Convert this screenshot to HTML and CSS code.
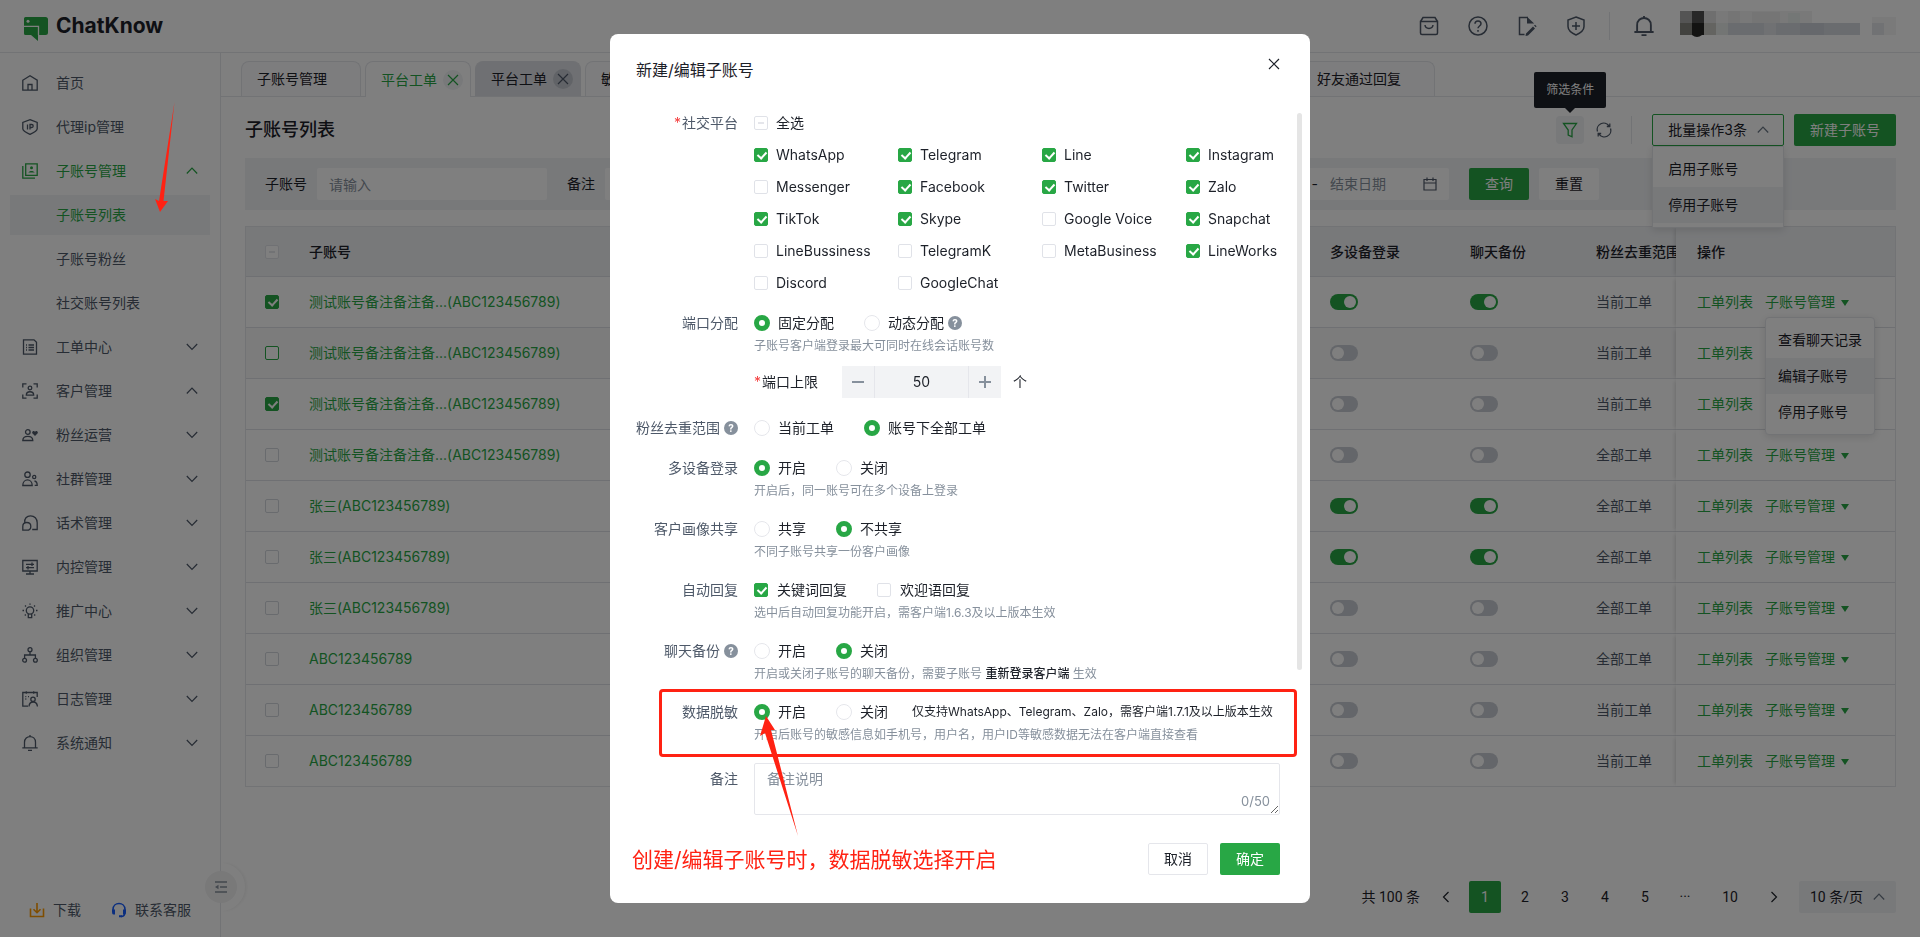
FILE: index.html
```html
<!DOCTYPE html>
<html lang="zh-CN">
<head>
  <meta charset="UTF-8">
  <meta name="viewport" content="width=device-width, initial-scale=1.0">
  <title>ChatKnow - 子账号列表</title>
  <link rel="stylesheet" href="styles.css">
</head>
<body>

<!-- Icon sprite -->
<svg class="sprite" aria-hidden="true">
  <symbol id="i-home" viewBox="0 0 16 16"><path d="M.8 5.2 8 .8l7.200 4.400v10H.8zM6 15V9.500h4V15"/></symbol>
  <symbol id="i-ip" viewBox="0 0 16 16"><path d="M8 .7 15.200 3.500v6.200c0 2.400-3.500 4-7.200 5.600C4.300 13.700.8 12.100.8 9.700V3.500zM5.500 5.500v5M8 10.500v-5h1.700a1.400 1.400 0 0 1 0 3H8"/></symbol>
  <symbol id="i-account" viewBox="0 0 16 16"><path d="M3.700.8h11.500v11.500H3.700zM.8 3v12.200H13"/><circle cx="9.500" cy="4.800" r="1.500" fill="currentColor" stroke="none"/><path d="M6.300 9.600c1-2.200 5.400-2.200 6.400 0z" fill="currentColor" stroke="none"/></symbol>
  <symbol id="i-order" viewBox="0 0 16 16"><path d="M1.500.8h10.500l2.500 2.500v11.900h-13zM4 6h1M6.500 6H12M4 8.500h1M6.500 8.500H12M4 11h1M6.500 11H12"/></symbol>
  <symbol id="i-customer" viewBox="0 0 16 16"><path d="M.8 4.500V.8h3.700M11.500.8h3.700v3.700M15.200 11.500v3.700h-3.700M4.500 15.200H.8v-3.700"/><circle cx="8" cy="5" r="1.800"/><path d="M4.300 12.200c0-4.600 7.400-4.600 7.400 0z"/></symbol>
  <symbol id="i-fans" viewBox="0 0 16 16"><circle cx="5.800" cy="5" r="2.300"/><path d="M.8 13.500c0-5.400 10-5.400 10 0z"/><path d="M13 9 10.300 6.300c-.8-2 1.700-3.200 2.700-1.600 1-1.600 3.500-.4 2.700 1.600z" fill="currentColor" stroke="none"/></symbol>
  <symbol id="i-group" viewBox="0 0 16 16"><circle cx="5.500" cy="3.700" r="2.700"/><path d="M.8 14.500c0-7.400 9.400-7.400 9.400 0z"/><circle cx="12.200" cy="6" r="1.600"/><path d="M12.500 10c1.600.3 2.700 1.800 2.700 4.300h-2.500"/></symbol>
  <symbol id="i-speech" viewBox="0 0 16 16"><path d="M2.800 8C1.800 3.500 5 .8 8.500.8c4 0 6.700 3 6.700 7v6.700h-5"/><path d="M.8 15.200v-3.800c0-5.200 8-5.200 8 0 0 2.300-1.800 3.800-4 3.800z"/></symbol>
  <symbol id="i-control" viewBox="0 0 16 16"><path d="M.8 1.500h14.400v10.500H.8zM8 12v3M4 15h8M4 5.300h8M10 3.500v3.600M4 8.700h8M6 7v3.400"/></symbol>
  <symbol id="i-bulb" viewBox="0 0 16 16"><circle cx="8" cy="7.500" r="3.700"/><path d="M6.300 11v3.700h3.400V11M8 .5v1.300M3 2.500l1 1M13 2.500l-1 1M.5 7.500H2M14 7.500h1.500M2.800 12.500l1-1M13.200 12.500l-1-1"/></symbol>
  <symbol id="i-org" viewBox="0 0 16 16"><circle cx="8" cy="2.700" r="2"/><circle cx="2.600" cy="13.300" r="1.900"/><circle cx="13.400" cy="13.300" r="1.900"/><path d="M8 4.700V8M2.600 11.400V8h10.800v3.400"/></symbol>
  <symbol id="i-log" viewBox="0 0 16 16"><path d="M6 15.200H.8V1.500h14.400V6M4.300.3v2.400M11.700.3v2.400M3.300 5.700h1M3.300 8h1M6 5.700h1"/><circle cx="11" cy="8.300" r="2.200"/><path d="M7 15.500c.4-6 8-6 8.400 0"/></symbol>
  <symbol id="i-bell" viewBox="0 0 16 16"><path d="M2.500 12.800V7.300c0-7.600 11-7.600 11 0v5.500M.3 12.800h15.400M6 15.300h4M8 0v1.500"/></symbol>
  <symbol id="i-down" viewBox="0 0 12 12"><path d="m.8 3 5.200 5.500L11.200 3"/></symbol>
  <symbol id="i-up" viewBox="0 0 12 12"><path d="m.8 8.500L6 3l5.200 5.500"/></symbol>
  <symbol id="i-left" viewBox="0 0 12 12"><path d="M8.500 1 3.500 6l5 5"/></symbol>
  <symbol id="i-right" viewBox="0 0 12 12"><path d="m3.500 1 5 5-5 5"/></symbol>
  <symbol id="i-close" viewBox="0 0 12 12"><path d="m1 1 10 10M11 1 1 11"/></symbol>
  <symbol id="i-minus" viewBox="0 0 12 12"><path d="M0 6h12"/></symbol>
  <symbol id="i-plus" viewBox="0 0 12 12"><path d="M0 6h12M6 0v12"/></symbol>
  <symbol id="i-download" viewBox="0 0 16 16"><path d="M1.500 6.500v8h13v-8M8 1v9.500M4.500 7.200 8 10.700l3.500-3.500"/></symbol>
  <symbol id="i-headset" viewBox="0 0 16 16"><path d="M2 10V7.500C2-.5 14-.5 14 7.500V10c0 3-1.500 4.500-4 4.500"/><path d="M1 7.500h3v5H2.500C1 12.500 1 11 1 7.500zM12 7.500h3c0 3.500 0 5-1.500 5H12zM8 13.300h3v2H8z" fill="currentColor" stroke="none"/></symbol>
  <symbol id="i-fold" viewBox="0 0 14 14"><path d="M1 2h12M6 7h7M1 12h12"/><path d="M1 7l3.500-2.300v4.600z" fill="currentColor" stroke="none"/></symbol>
  <symbol id="i-bag" viewBox="0 0 20 20"><path d="M1.500 5.500h17v11.500a1.500 1.500 0 0 1-1.500 1.500H3A1.500 1.500 0 0 1 1.500 17zL4 1.500h12l2.500 4M6 9c.5 4.500 7.500 4.500 8 0"/></symbol>
  <symbol id="i-help" viewBox="0 0 20 20"><circle cx="10" cy="10" r="9"/><path d="M7 7.800c0-3.800 6-3.800 6 0 0 2.200-3 2.200-3 4.500M10 14v1.700"/></symbol>
  <symbol id="i-doc" viewBox="0 0 20 20"><path d="M7.500 18.500h-5v-17h8.500"/><path d="M10 .7 17.200 7.500H10zM9 17.500l7-7 2 2-7 7-2.500.4zM17 9.500l1-.8 1.600 1.600-.8 1z" fill="currentColor" stroke="none"/></symbol>
  <symbol id="i-shield" viewBox="0 0 20 20"><path d="m10 1 8 3v6.500c0 4-3.500 6.500-8 8.500-4.500-2-8-4.500-8-8.500V4zM10 6v8M6 10h8"/></symbol>
  <symbol id="i-filter" viewBox="0 0 16 16"><path d="M1.500 1.500h13L10 8v6.800L6.200 13V8z"/></symbol>
  <symbol id="i-refresh" viewBox="0 0 16 16"><path d="M1.500 9.500A6.500 6.500 0 0 1 13 3.800M14.500 6.500A6.500 6.500 0 0 1 3 12.200M13.800 1.500v3h-3M2.200 14.500v-3h3"/></symbol>
  <symbol id="i-calendar" viewBox="0 0 14 14"><path d="M1 2.500h12V13H1zM1 6h12M4 .5v3.500M10 .5v3.500"/></symbol>
</svg>

<div class="app">
  <header class="topbar">
    <a class="logo" href="#">
      <svg class="logo-mark" viewBox="0 0 24 24" aria-hidden="true">
        <path fill="#28a745" d="M1.500 0h20A2.500 2.500 0 0 1 24 2.500v13a2.500 2.500 0 0 1-2.500 2.500H14v6l-7-6H1.500A1.500 1.500 0 0 1 0 16.500v-15A1.500 1.500 0 0 1 1.500 0z"/>
        <path fill="none" stroke="#fff" stroke-width="1.300" d="M0 9.300h14.500V18"/>
        <circle cx="4" cy="4.200" r="1.500" fill="#fff"/>
      </svg>
      <span>ChatKnow</span>
    </a>
    <nav class="top-actions" aria-label="快捷入口">
      <button class="icon-btn" aria-label="商城"><svg class="icon i20"><use href="#i-bag"/></svg></button>
      <button class="icon-btn" aria-label="帮助"><svg class="icon i20"><use href="#i-help"/></svg></button>
      <button class="icon-btn" aria-label="文档"><svg class="icon i20"><use href="#i-doc"/></svg></button>
      <button class="icon-btn" aria-label="安全"><svg class="icon i20"><use href="#i-shield"/></svg></button>
      <span class="divider"></span>
      <button class="icon-btn" aria-label="通知"><svg class="icon i20"><use href="#i-bell"/></svg></button>
      <svg class="user-mask" viewBox="0 0 216 26" aria-hidden="true">
        <path fill="#a8a8a8" d="M0 0h12v12H0z"/><path fill="#505050" d="M12 0h12v12H12z"/><path fill="#dedede" d="M24 0h12v12H24z"/>
        <path fill="#f3f3f3" d="M36 0h12v12H36zM60 0h72v12H60z"/><path fill="#eaeaea" d="M48 0h12v12H48zM72 1h28v11H72z"/>
        <path fill="#e9eeec" d="M108 2h12v10h-12z"/>
        <path fill="#84847f" d="M0 12h12v12H0z"/><path fill="#262624" d="M12 12h12v12H12z"/><path fill="#c9c8c3" d="M24 12h12v12H24z"/><path fill="#e6eae8" d="M36 12h12v12H36z"/>
        <path fill="#d5d8de" d="M48 12h132v12H48z"/><path fill="#e0e2e6" d="M84 12h12v12H84z"/><path fill="#ccd0d9" d="M120 12h24v12h-24z"/>
        <path fill="#262624" d="M12 24h10q-5 4-10 0z"/>
        <path fill="#f4f4f4" d="M192 6h24v6h-24zM204 12h12v12h-12z"/><path fill="#e2e4e9" d="M192 12h12v12h-12z"/>
      </svg>
    </nav>
  </header>

  <div class="layout">
    <aside class="sidebar">
      <nav class="menu" aria-label="主菜单">
        <a class="menu-item" href="#"><svg class="icon i16"><use href="#i-home"/></svg><span>首页</span></a>
        <a class="menu-item" href="#"><svg class="icon i16"><use href="#i-ip"/></svg><span>代理ip管理</span></a>
        <a class="menu-item current" href="#"><svg class="icon i16"><use href="#i-account"/></svg><span>子账号管理</span><svg class="icon i12"><use href="#i-up"/></svg></a>
        <a class="menu-item sub current selected" href="#">子账号列表</a>
        <a class="menu-item sub" href="#">子账号粉丝</a>
        <a class="menu-item sub" href="#">社交账号列表</a>
        <a class="menu-item" href="#"><svg class="icon i16"><use href="#i-order"/></svg><span>工单中心</span><svg class="icon i12"><use href="#i-down"/></svg></a>
        <a class="menu-item" href="#"><svg class="icon i16"><use href="#i-customer"/></svg><span>客户管理</span><svg class="icon i12"><use href="#i-up"/></svg></a>
        <a class="menu-item" href="#"><svg class="icon i16"><use href="#i-fans"/></svg><span>粉丝运营</span><svg class="icon i12"><use href="#i-down"/></svg></a>
        <a class="menu-item" href="#"><svg class="icon i16"><use href="#i-group"/></svg><span>社群管理</span><svg class="icon i12"><use href="#i-down"/></svg></a>
        <a class="menu-item" href="#"><svg class="icon i16"><use href="#i-speech"/></svg><span>话术管理</span><svg class="icon i12"><use href="#i-down"/></svg></a>
        <a class="menu-item" href="#"><svg class="icon i16"><use href="#i-control"/></svg><span>内控管理</span><svg class="icon i12"><use href="#i-down"/></svg></a>
        <a class="menu-item" href="#"><svg class="icon i16"><use href="#i-bulb"/></svg><span>推广中心</span><svg class="icon i12"><use href="#i-down"/></svg></a>
        <a class="menu-item" href="#"><svg class="icon i16"><use href="#i-org"/></svg><span>组织管理</span><svg class="icon i12"><use href="#i-down"/></svg></a>
        <a class="menu-item" href="#"><svg class="icon i16"><use href="#i-log"/></svg><span>日志管理</span><svg class="icon i12"><use href="#i-down"/></svg></a>
        <a class="menu-item" href="#"><svg class="icon i16"><use href="#i-bell"/></svg><span>系统通知</span><svg class="icon i12"><use href="#i-down"/></svg></a>
      </nav>
      <div class="side-footer">
        <a href="#"><svg class="icon i16 orange"><use href="#i-download"/></svg>下载</a>
        <a href="#"><svg class="icon i16 blue"><use href="#i-headset"/></svg>联系客服</a>
      </div>
      <div class="fold">
        <button class="fold-btn" aria-label="收起菜单"><svg class="icon i14"><use href="#i-fold"/></svg></button>
      </div>
    </aside>

    <main class="main">
      <div class="tabs">
        <a class="tab" href="#">子账号管理</a>
        <a class="tab closable active" href="#">平台工单<span class="tab-close"><svg class="icon i12"><use href="#i-close"/></svg></span></a>
        <a class="tab closable hover" href="#">平台工单<span class="tab-close"><svg class="icon i12"><use href="#i-close"/></svg></span></a>
        <a class="tab" href="#">敏感词管理</a>
        <a class="tab" href="#">子账号粉丝</a>
        <a class="tab" href="#">子账号列表</a>
        <a class="tab" href="#">关键词回复</a>
        <a class="tab closable" href="#">社群管理<span class="tab-close"><svg class="icon i12"><use href="#i-close"/></svg></span></a>
        <a class="tab closable" href="#">话术管理<span class="tab-close"><svg class="icon i12"><use href="#i-close"/></svg></span></a>
        <a class="tab" href="#">好友通过回复</a>
      </div>

      <div class="content">
        <div class="title-row">
          <h1>子账号列表</h1>
          <div class="tool filter-tool">
            <button class="tool-btn on" aria-label="筛选条件"><svg class="icon i16"><use href="#i-filter"/></svg></button>
            <span class="tooltip">筛选条件</span>
          </div>
          <button class="tool-btn" aria-label="刷新"><svg class="icon i16"><use href="#i-refresh"/></svg></button>
          <span class="divider"></span>
          <div class="batch">
            <button class="btn batch-btn">批量操作3条<svg class="icon i12"><use href="#i-up"/></svg></button>
            <ul class="dropdown batch-menu">
              <li>启用子账号</li>
              <li class="hover">停用子账号</li>
            </ul>
          </div>
          <button class="btn primary new-btn">新建子账号</button>
        </div>

        <form class="filter-bar">
          <label for="f-account">子账号</label>
          <input id="f-account" type="text" placeholder="请输入">
          <label for="f-remark">备注</label>
          <input id="f-remark" type="text" placeholder="请输入">
          <label for="f-start">创建时间</label>
          <div class="range">
            <input id="f-start" type="text" placeholder="开始日期">
            <span>-</span>
            <input class="range-end" type="text" placeholder="结束日期" aria-label="结束日期">
            <svg class="icon i14"><use href="#i-calendar"/></svg>
          </div>
          <button type="button" class="btn primary">查询</button>
          <button type="button" class="btn plain">重置</button>
        </form>

        <div class="table-wrap">
          <table>
            <thead>
              <tr>
                <th class="c-check"><input type="checkbox" class="check half" aria-label="全选"></th>
                <th>子账号</th>
                <th class="c-device">多设备登录</th>
                <th class="c-backup">聊天备份</th>
                <th class="c-scope">粉丝去重范围</th>
                <th class="c-action">操作</th>
              </tr>
            </thead>
            <tbody id="rows"></tbody>
          </table>
        </div>

        <div class="pagination">
          <span class="total">共 100 条</span>
          <button class="arrow" aria-label="上一页"><svg class="icon i12"><use href="#i-left"/></svg></button>
          <button class="on">1</button>
          <button>2</button>
          <button>3</button>
          <button>4</button>
          <button>5</button>
          <button>···</button>
          <button class="wide">10</button>
          <button class="arrow" aria-label="下一页"><svg class="icon i12"><use href="#i-right"/></svg></button>
          <button class="page-size">10 条/页<svg class="icon i12"><use href="#i-up"/></svg></button>
        </div>
      </div>
    </main>
  </div>
</div>

<!-- Create / edit dialog -->
<div class="mask">
  <div class="modal" role="dialog" aria-labelledby="dialog-title">
    <div class="modal-head">
      <h2 id="dialog-title">新建/编辑子账号</h2>
      <button class="modal-close" aria-label="关闭"><svg class="icon i12"><use href="#i-close"/></svg></button>
    </div>
    <form class="modal-body">
      <div class="item">
        <div class="label"><i>*</i>社交平台</div>
        <div class="field">
          <label class="opt"><input type="checkbox" class="check half">全选</label>
          <div class="platforms">
            <label class="opt"><input type="checkbox" class="check" checked>WhatsApp</label>
            <label class="opt"><input type="checkbox" class="check" checked>Telegram</label>
            <label class="opt"><input type="checkbox" class="check" checked>Line</label>
            <label class="opt"><input type="checkbox" class="check" checked>Instagram</label>
            <label class="opt"><input type="checkbox" class="check">Messenger</label>
            <label class="opt"><input type="checkbox" class="check" checked>Facebook</label>
            <label class="opt"><input type="checkbox" class="check" checked>Twitter</label>
            <label class="opt"><input type="checkbox" class="check" checked>Zalo</label>
            <label class="opt"><input type="checkbox" class="check" checked>TikTok</label>
            <label class="opt"><input type="checkbox" class="check" checked>Skype</label>
            <label class="opt"><input type="checkbox" class="check">Google Voice</label>
            <label class="opt"><input type="checkbox" class="check" checked>Snapchat</label>
            <label class="opt"><input type="checkbox" class="check">LineBussiness</label>
            <label class="opt"><input type="checkbox" class="check">TelegramK</label>
            <label class="opt"><input type="checkbox" class="check">MetaBusiness</label>
            <label class="opt"><input type="checkbox" class="check" checked>LineWorks</label>
            <label class="opt"><input type="checkbox" class="check">Discord</label>
            <label class="opt"><input type="checkbox" class="check">GoogleChat</label>
          </div>
        </div>
      </div>

      <div class="item">
        <div class="label">端口分配</div>
        <div class="field">
          <div class="opts">
            <label class="opt"><input type="radio" class="radio" name="port" checked>固定分配</label>
            <label class="opt"><input type="radio" class="radio" name="port">动态分配<span class="tip">?</span></label>
          </div>
          <p class="hint">子账号客户端登录最大可同时在线会话账号数</p>
          <div class="port-row">
            <label for="port-max"><i>*</i>端口上限</label>
            <div class="stepper">
              <button type="button" aria-label="减少"><svg class="icon i12"><use href="#i-minus"/></svg></button>
              <input id="port-max" type="text" value="50">
              <button type="button" aria-label="增加"><svg class="icon i12"><use href="#i-plus"/></svg></button>
            </div>
            <span>个</span>
          </div>
        </div>
      </div>

      <div class="item">
        <div class="label">粉丝去重范围<span class="tip">?</span></div>
        <div class="field opts">
          <label class="opt"><input type="radio" class="radio" name="scope">当前工单</label>
          <label class="opt"><input type="radio" class="radio" name="scope" checked>账号下全部工单</label>
        </div>
      </div>

      <div class="item">
        <div class="label">多设备登录</div>
        <div class="field">
          <div class="opts">
            <label class="opt"><input type="radio" class="radio" name="device" checked>开启</label>
            <label class="opt"><input type="radio" class="radio" name="device">关闭</label>
          </div>
          <p class="hint">开启后，同一账号可在多个设备上登录</p>
        </div>
      </div>

      <div class="item">
        <div class="label">客户画像共享</div>
        <div class="field">
          <div class="opts">
            <label class="opt"><input type="radio" class="radio" name="share">共享</label>
            <label class="opt"><input type="radio" class="radio" name="share" checked>不共享</label>
          </div>
          <p class="hint">不同子账号共享一份客户画像</p>
        </div>
      </div>

      <div class="item">
        <div class="label">自动回复</div>
        <div class="field">
          <div class="opts">
            <label class="opt reply"><input type="checkbox" class="check" checked>关键词回复</label>
            <label class="opt reply"><input type="checkbox" class="check">欢迎语回复</label>
          </div>
          <p class="hint">选中后自动回复功能开启，需客户端1.6.3及以上版本生效</p>
        </div>
      </div>

      <div class="item">
        <div class="label">聊天备份<span class="tip">?</span></div>
        <div class="field">
          <div class="opts">
            <label class="opt"><input type="radio" class="radio" name="backup">开启</label>
            <label class="opt"><input type="radio" class="radio" name="backup" checked>关闭</label>
          </div>
          <p class="hint">开启或关闭子账号的聊天备份，需要子账号 <b>重新登录客户端</b> 生效</p>
        </div>
      </div>

      <div class="item">
        <div class="label">数据脱敏</div>
        <div class="field">
          <div class="opts">
            <label class="opt"><input type="radio" class="radio" name="desens" checked>开启</label>
            <label class="opt"><input type="radio" class="radio" name="desens">关闭</label>
            <span class="note">仅支持WhatsApp、Telegram、Zalo，需客户端1.7.1及以上版本生效</span>
          </div>
          <p class="hint">开启后账号的敏感信息如手机号，用户名，用户ID等敏感数据无法在客户端直接查看</p>
        </div>
      </div>

      <div class="item remark">
        <label class="label" for="remark">备注</label>
        <div class="field textarea">
          <textarea id="remark" placeholder="备注说明"></textarea>
          <span class="count">0/50</span>
        </div>
      </div>
    </form>
    <div class="modal-foot">
      <button class="btn outline">取消</button>
      <button class="btn primary">确定</button>
    </div>
    <span class="scrollbar"></span>

    <!-- Callouts on the dialog -->
    <div class="mark-box"></div>
    <svg class="mark-arrow" viewBox="0 0 40 120" aria-hidden="true"><path fill="#ff2213" d="M6 0 15 14 11 14 38 120 5 17 0 20z"/></svg>
    <p class="mark-text">创建/编辑子账号时，数据脱敏选择开启</p>
  </div>
  <svg class="side-arrow" viewBox="0 0 20 110" aria-hidden="true"><path fill="#ff2213" d="M19.500 0 8.500 99 13 99 5 110 0 97 4 99z"/></svg>
</div>

<script src="script.js"></script>
</body>
</html>
```
FILE: styles.css
```css
* {
  box-sizing: border-box;
}
body {
  margin: 0;
  color: #1d2129;
  background: #fff;
  font-family: Inter, "Noto Sans CJK SC", sans-serif;
  font-size: 14px;
  line-height: 22px;
}
h1, h2, p, ul {
  margin: 0;
  padding: 0;
  font-weight: 400;
}
ul {
  list-style: none;
}
a {
  color: inherit;
  text-decoration: none;
}
button, input, textarea {
  margin: 0;
  padding: 0;
  border: none;
  background: none;
  font: inherit;
  color: inherit;
}
input::placeholder, textarea::placeholder {
  color: #86909c;
  opacity: 1;
}

/* Icons */
.sprite {
  display: none;
}
.icon {
  flex: none;
  display: block;
  fill: none;
  stroke: currentColor;
  stroke-width: 1.3;
}
.i12 { width: 12px; height: 12px; stroke-width: 1.2; }
.i14 { width: 14px; height: 14px; }
.i16 { width: 16px; height: 16px; }
.i20 { width: 20px; height: 20px; stroke-width: 1.5; }
.icon.orange { color: #ff9a00; stroke-width: 1.6; }
.icon.blue { color: #165dff; stroke-width: 1.6; }

/* Buttons */
.btn {
  height: 32px;
  padding: 0 16px;
  border-radius: 2px;
  white-space: nowrap;
}
.btn.primary {
  background: #28a745;
  color: #fff;
}
.btn.plain {
  background: #fff;
}
.btn.outline {
  border: 1px solid #e5e6eb;
  padding: 0 15px;
}
.divider {
  width: 1px;
  height: 28px;
  background: #e5e6eb;
}

/* Checkbox, radio, switch */
.check, .radio, .switch {
  appearance: none;
  position: relative;
  flex: none;
  display: block;
}
.check {
  width: 14px;
  height: 14px;
  border: 1px solid #e0e2e8;
  border-radius: 2px;
  background: #fff;
}
.check.focus {
  border-color: #28a745;
}
td .check:not(:checked):not(.focus) {
  border-color: #d3d6dc;
}
.check:checked {
  background: #28a745;
  border-color: #28a745;
}
.check:checked::after {
  content: "";
  position: absolute;
  left: 4px;
  top: 1px;
  width: 4px;
  height: 7px;
  border: solid #fff;
  border-width: 0 2px 2px 0;
  transform: rotate(42deg);
}
.check.half::after {
  content: "";
  position: absolute;
  left: 3px;
  top: 5px;
  width: 6px;
  height: 2px;
  background: #e5e6eb;
}
.radio {
  width: 16px;
  height: 16px;
  border: 1px solid #e5e6eb;
  border-radius: 50%;
}
.radio:checked {
  border: 5px solid #28a745;
}
.switch {
  width: 28px;
  height: 16px;
  border-radius: 8px;
  background: #c9cdd4;
}
.switch::after {
  content: "";
  position: absolute;
  left: 2px;
  top: 2px;
  width: 12px;
  height: 12px;
  border-radius: 50%;
  background: #fff;
}
.switch:checked {
  background: #28a745;
}
.switch:checked::after {
  left: 14px;
}

/* Frame */
.app {
  display: flex;
  flex-direction: column;
  min-height: 100vh;
}
.topbar {
  display: flex;
  justify-content: space-between;
  align-items: center;
  height: 53px;
  padding: 0 24px;
  border-bottom: 1px solid #e5e6eb;
}
.logo {
  display: flex;
  align-items: center;
  gap: 8px;
  font-size: 21px;
  font-weight: 700;
}
.logo-mark {
  width: 24px;
  height: 24px;
  margin-top: 6px;
}
.top-actions {
  display: flex;
  align-items: center;
  color: #4e5969;
}
.icon-btn {
  margin-right: 29px;
}
.top-actions .divider {
  margin: 0 24px 0 -6px;
}
.user-mask {
  width: 216px;
  height: 26px;
  margin: 0 0 4px -3px;
}
.layout {
  flex: 1;
  display: flex;
}

/* Sidebar */
.sidebar {
  position: relative;
  flex: none;
  display: flex;
  flex-direction: column;
  width: 221px;
  border-right: 1px solid #e5e6eb;
  color: #4e5969;
}
.menu {
  display: flex;
  flex-direction: column;
  gap: 4px;
  padding: 10px;
}
.menu-item {
  display: flex;
  align-items: center;
  gap: 18px;
  height: 40px;
  padding: 0 12px;
}
.menu-item span {
  flex: 1;
}
.menu-item.sub {
  padding-left: 46px;
}
.menu-item.current {
  color: #28a745;
}
.menu-item.selected {
  background: #f0f2f5;
}
.side-footer {
  display: flex;
  gap: 30px;
  margin-top: auto;
  padding: 0 0 16px 29px;
}
.side-footer a {
  display: flex;
  align-items: center;
  gap: 8px;
}
.fold {
  position: absolute;
  right: -25px;
  bottom: 26px;
  display: flex;
  align-items: center;
  width: 24px;
  height: 48px;
  border-radius: 0 24px 24px 0;
  background: #fff;
  box-shadow: 2px 0 3px rgba(0, 0, 0, 0.05);
}
.fold-btn {
  display: flex;
  justify-content: center;
  align-items: center;
  flex: none;
  width: 32px;
  height: 32px;
  margin-left: -16px;
  border-radius: 50%;
  background: #f2f2f3;
  color: #86909c;
}

/* Tabs */
.main {
  flex: 1;
  min-width: 0;
  display: flex;
  flex-direction: column;
}
.tabs {
  display: flex;
  gap: 4px;
  height: 44px;
  padding: 8px 20px 0;
  border-bottom: 1px solid #e5e6eb;
}
.tab {
  display: flex;
  align-items: center;
  gap: 6px;
  height: 35px;
  padding: 0 33px 0 15px;
  border: 1px solid #e5e6eb;
  border-bottom: none;
  border-radius: 8px 8px 0 0;
  white-space: nowrap;
  background: #fbfbfc;
}
.tab.closable {
  padding-right: 7px;
}
.tab.active {
  height: 36px;
  background: #fff;
  color: #28a745;
}
.tab.hover {
  border-color: #dfe1e6;
  background: #dfe1e6;
}
.tab-close {
  display: flex;
  justify-content: center;
  align-items: center;
  width: 20px;
  height: 20px;
  border-radius: 50%;
}
.tab.active .tab-close {
  background: #f0f2f5;
}
.tab.hover .tab-close {
  background: #c3c7cf;
  color: #4e5969;
}

/* Title and tools */
.content {
  flex: 1;
  display: flex;
  flex-direction: column;
  padding: 17px 24px 24px;
}
.title-row {
  display: flex;
  align-items: center;
  height: 32px;
}
.title-row h1 {
  flex: 1;
  font-size: 18px;
  font-weight: 500;
}
.tool {
  position: relative;
}
.tool-btn {
  display: flex;
  justify-content: center;
  align-items: center;
  width: 28px;
  height: 28px;
  margin-right: 6px;
  border-radius: 4px;
  color: #4e5969;
}
.tool-btn.on {
  background: #f0f2f5;
  color: #28a745;
}
.tooltip {
  position: absolute;
  left: -22px;
  bottom: 36px;
  padding: 7px 12px;
  border-radius: 2px;
  background: #1d2129;
  color: #fff;
  font-size: 12px;
  white-space: nowrap;
}
.tooltip::after {
  content: "";
  position: absolute;
  left: 31px;
  top: 100%;
  border: 5px solid transparent;
  border-top-color: #1d2129;
}
.title-row .divider {
  margin: 0 20px 0 7px;
}
.batch {
  position: relative;
  margin-right: 10px;
}
.batch-btn {
  display: flex;
  align-items: center;
  gap: 10px;
  padding: 0 14px 0 15px;
  border: 1px solid #28a745;
}
.batch-btn .icon, .page-size .icon {
  color: #6b7785;
}
.dropdown {
  position: absolute;
  z-index: 2;
  padding: 4px 0;
  background: #fff;
  border: 1px solid #e5e6eb;
  box-shadow: 0 2px 8px rgba(0, 0, 0, 0.12);
}
.dropdown li {
  padding: 7px 12px;
  white-space: nowrap;
}
.dropdown .hover {
  background: #f0f2f5;
}
.batch-menu {
  top: 100%;
  left: 0;
  right: 0;
}
.batch-menu li {
  padding-left: 15px;
}

/* Filters */
.filter-bar {
  display: flex;
  align-items: center;
  gap: 10px;
  margin-top: 12px;
  padding: 10px 20px;
  background: #f0f2f5;
}
.filter-bar > input, .range {
  width: 230px;
  height: 32px;
  margin-right: 10px;
  padding: 0 12px;
  border-radius: 2px;
  background: #fff;
}
.range {
  display: flex;
  align-items: center;
  flex: 0 1 528px;
}
.range input {
  flex: 1;
  min-width: 0;
}
.range .range-end {
  flex: 0 0 93px;
  margin-left: 12px;
}
.range .icon {
  color: #4e5969;
  stroke-width: 1.2;
}

/* Table */
.table-wrap {
  margin-top: 16px;
  border: 1px solid #e5e6eb;
}
table {
  width: 100%;
  table-layout: fixed;
  border-collapse: separate;
  border-spacing: 0;
}
th, td {
  height: 51px;
  padding: 0 16px;
  border-bottom: 1px solid #dfe1e6;
  text-align: left;
  white-space: nowrap;
}
th {
  height: 50px;
  background: #f0f2f5;
  font-weight: 500;
}
tbody tr:last-child td {
  height: 50px;
  border-bottom: none;
}
tbody tr.hover td:not(.c-action) {
  background: #f8f8f9;
}
.c-check {
  width: 47px;
  padding: 0 0 0 19px;
}
.c-device { width: 140px; }
.c-backup { width: 126px; }
.c-scope {
  width: 96px;
  padding-right: 0;
  overflow: hidden;
}
td.c-scope {
  color: #4e5969;
}
.c-action {
  position: relative;
  width: 219px;
  padding-left: 21px;
  background-color: #fff;
  box-shadow: -3px 0 4px -2px rgba(0, 0, 0, 0.15);
}
th.c-action {
  background-color: #f0f2f5;
}
td a {
  color: #28a745;
}
.more::after {
  content: "";
  display: inline-block;
  margin-left: 6px;
  vertical-align: 1px;
  border: 4px solid transparent;
  border-top: 6px solid #28a745;
  border-bottom: none;
}
.c-action a + a {
  margin-left: 12px;
}
.row-menu {
  top: 40px;
  right: 20px;
  border-radius: 4px;
}

/* Pagination */
.pagination {
  display: flex;
  justify-content: flex-end;
  align-items: center;
  gap: 8px;
  margin-top: auto;
  font-family: Roboto, "Noto Sans CJK SC", sans-serif;
}
.pagination button {
  min-width: 32px;
  height: 32px;
  border-radius: 2px;
}
.pagination .total {
  margin-right: 3px;
}
.pagination .arrow {
  display: flex;
  justify-content: center;
  align-items: center;
  min-width: 30px;
}
.pagination .on {
  background: #28a745;
  color: #fff;
}
.pagination .wide {
  min-width: 42px;
}
.pagination .page-size {
  display: flex;
  align-items: center;
  gap: 10px;
  margin-left: 2px;
  padding: 0 11px;
  background: #f0f2f5;
}

/* Dialog */
.mask {
  position: fixed;
  inset: 0;
  z-index: 10;
  display: flex;
  justify-content: center;
  align-items: center;
  background: rgba(0, 0, 0, 0.5);
}
.modal {
  position: relative;
  width: 700px;
  padding: 24px 30px 28px 26px;
  border-radius: 8px;
  background: #fff;
}
.modal-head {
  display: flex;
  justify-content: space-between;
  line-height: 24px;
}
.modal-head h2 {
  font-size: 16px;
}
.modal-close {
  align-self: flex-start;
}
.modal-body {
  margin-top: 25px;
}
.item {
  display: flex;
  gap: 16px;
  margin-bottom: 8px;
}
.label {
  display: flex;
  justify-content: flex-end;
  align-items: center;
  flex: none;
  width: 102px;
  height: 32px;
  color: #4e5969;
}
.item i {
  margin-right: 1px;
  color: #f53f3f;
  font-style: normal;
}
.field {
  flex: 1;
}
.opt {
  display: flex;
  align-items: center;
  gap: 8px;
  height: 32px;
  white-space: nowrap;
}
.opt.reply {
  gap: 9px;
}
.opts {
  display: flex;
  gap: 30px;
}
.platforms {
  display: grid;
  grid-template-columns: repeat(4, 144px);
  margin-right: -50px;
}
.tip {
  width: 14px;
  height: 14px;
  margin-left: 4px;
  border-radius: 50%;
  background: #86909c;
  color: #fff;
  font-size: 10px;
  font-weight: 700;
  line-height: 14px;
  text-align: center;
}
.opt .tip {
  margin-left: -4px;
}
.hint {
  padding-bottom: 7px;
  color: #86909c;
  font-size: 12px;
  line-height: 14px;
}
.hint b {
  color: #1d2129;
  font-weight: 500;
}
.note {
  margin-left: -6px;
  font-size: 12px;
  line-height: 32px;
  white-space: nowrap;
}
.port-row {
  display: flex;
  align-items: center;
  margin: 6px 0;
  padding-bottom: 0;
}
.port-row + * {
  margin-top: 6px;
}
.stepper {
  display: flex;
  height: 32px;
  margin: 0 12px 0 24px;
  background: #f2f3f5;
}
.stepper button {
  display: flex;
  justify-content: center;
  align-items: center;
  width: 32px;
  color: #86909c;
}
.stepper .icon {
  stroke-width: 2;
}
.stepper input {
  width: 95px;
  border: solid #e5e6eb;
  border-width: 0 1px;
  text-align: center;
}
.remark {
  margin: 14px 0 0;
}
.textarea {
  position: relative;
  height: 52px;
}
textarea {
  display: block;
  width: 100%;
  height: 52px;
  padding: 4px 12px;
  border: 1px solid #e5e6eb;
  border-radius: 2px;
}
.count {
  position: absolute;
  right: 10px;
  bottom: 3px;
  color: #86909c;
  font-size: 13px;
}
.modal-foot {
  display: flex;
  justify-content: flex-end;
  gap: 12px;
  margin-top: 28px;
}
.scrollbar {
  position: absolute;
  top: 79px;
  right: 8px;
  width: 5px;
  height: 557px;
  border-radius: 3px;
  background: #e5e5e5;
}

/* Red callouts */
.mark-box {
  position: absolute;
  top: 655px;
  left: 49px;
  right: 13px;
  height: 68px;
  border: 3px solid #ff2213;
  border-radius: 4px;
}
.mark-arrow {
  position: absolute;
  top: 682px;
  left: 150px;
  width: 40px;
  height: 120px;
}
.mark-text {
  position: absolute;
  left: 22px;
  bottom: 30px;
  color: #ff2213;
  font-size: 21px;
  line-height: 26px;
}
.side-arrow {
  position: absolute;
  top: 102px;
  left: 155px;
  width: 20px;
  height: 110px;
}
```
FILE: script.js
```js
const TEST = '测试账号备注备注备...(ABC123456789)';
const ZHANG = '张三(ABC123456789)';
const ABC = 'ABC123456789';

const rows = [
  { name: TEST, checked: true, on: true, scope: '当前工单', menu: true },
  { name: TEST, focus: true, hover: true, scope: '当前工单' },
  { name: TEST, checked: true, scope: '当前工单' },
  { name: TEST, scope: '全部工单' },
  { name: ZHANG, on: true, scope: '全部工单' },
  { name: ZHANG, on: true, scope: '全部工单' },
  { name: ZHANG, scope: '全部工单' },
  { name: ABC, scope: '全部工单' },
  { name: ABC, scope: '当前工单' },
  { name: ABC, scope: '当前工单' },
];

const rowMenu = `
  <ul class="dropdown row-menu">
    <li>查看聊天记录</li>
    <li class="hover">编辑子账号</li>
    <li>停用子账号</li>
  </ul>`;

document.getElementById('rows').innerHTML = rows.map(row => `
  <tr class="${row.hover ? 'hover' : ''}">
    <td class="c-check"><input type="checkbox" class="check${row.focus ? ' focus' : ''}" aria-label="选择" ${row.checked ? 'checked' : ''}></td>
    <td><a href="#">${row.name}</a></td>
    <td><input type="checkbox" class="switch" aria-label="多设备登录" ${row.on ? 'checked' : ''}></td>
    <td><input type="checkbox" class="switch" aria-label="聊天备份" ${row.on ? 'checked' : ''}></td>
    <td class="c-scope">${row.scope}</td>
    <td class="c-action">
      <a href="#">工单列表</a><a class="more" href="#">子账号管理</a>${row.menu ? rowMenu : ''}
    </td>
  </tr>`).join('');
```
